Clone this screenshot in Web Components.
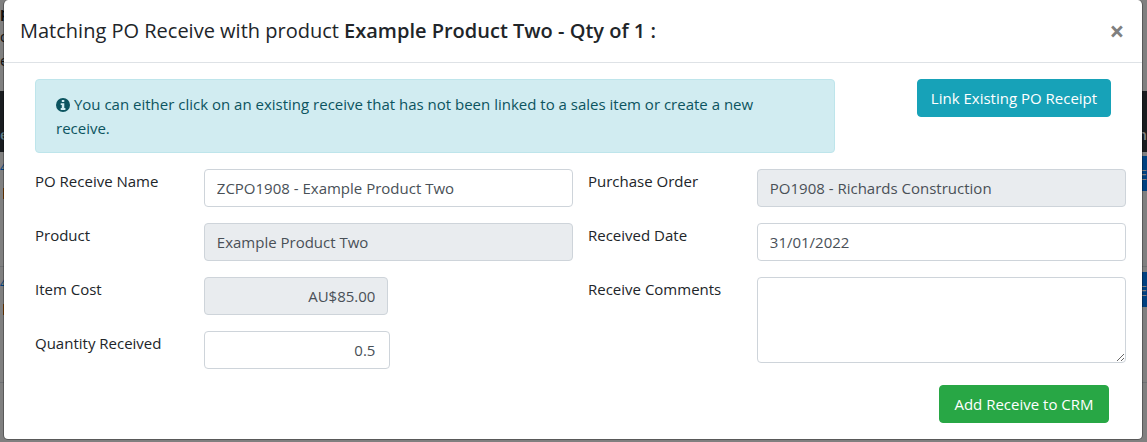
<!DOCTYPE html>
<html lang="en">
<head>
<meta charset="utf-8">
<title>Matching PO Receive</title>
<style>
  html, body { margin: 0; height: 100%; }
  body {
    font-family: "Open Sans", "Noto Sans", sans-serif;
    font-size: 15px;
    line-height: 24px;
    color: #212529;
    background: #808080;
    overflow: hidden;
  }
</style>
</head>
<body>
<receive-screen>
  <page-edge slot="page" side="left"></page-edge>
  <page-edge slot="page" side="right"></page-edge>
  <modal-dialog>
    <span slot="title">Matching PO Receive with product <b style="font-weight:600">Example Product Two - Qty of 1 :</b></span>
    <notice-row>
      You can either click on an existing receive that has not been linked to a sales item or create a new receive.
      <action-button slot="action" tone="info">Link Existing PO Receipt</action-button>
    </notice-row>
    <field-columns>
      <form-field slot="start" value="ZCPO1908 - Example Product Two">PO Receive Name</form-field>
      <form-field slot="start" value="Example Product Two" locked>Product</form-field>
      <form-field slot="start" value="AU$85.00" locked size="half">Item Cost</form-field>
      <form-field slot="start" value="0.5" size="number">Quantity Received</form-field>
      <form-field slot="end" value="PO1908 - Richards Construction" locked>Purchase Order</form-field>
      <form-field slot="end" value="31/01/2022">Received Date</form-field>
      <form-field slot="end" multiline>Receive Comments</form-field>
      <action-button slot="end" tone="success">Add Receive to CRM</action-button>
    </field-columns>
  </modal-dialog>
</receive-screen>

<script>
const define = (name, html, setup) => {
  const template = document.createElement('template');
  template.innerHTML = html;
  customElements.define(name, class extends HTMLElement {
    constructor() {
      super();
      this.attachShadow({ mode: 'open' }).append(template.content.cloneNode(true));
    }
    connectedCallback() { if (setup) setup(this, this.shadowRoot); }
  });
};

define('receive-screen', `
  <style>
    :host { display: grid; min-height: 100%; }
    .page, .layer { grid-area: 1 / 1; min-width: 0; }
    .page { display: flex; justify-content: space-between; }
    .layer { z-index: 1; padding: 0 4px 2px 3px; }
  </style>
  <div class="page"><slot name="page"></slot></div>
  <div class="layer"><slot></slot></div>`);

/* Slivers of the dimmed page that stay visible beside the dialog. */
define('page-edge', `
  <style>
    :host { display: flex; flex-direction: column; width: 16px; white-space: nowrap; }
    div { box-sizing: border-box; width: 100%; flex: none; display: flex; align-items: center; }
    :host([side=right]) div { justify-content: flex-end; }
    .top { height: 91px; flex-direction: column; color: #111; }
    :host([side=left]) .top { align-items: flex-start; }
    .head { height: 61px; background: #1a1d20; color: #808080; align-items: flex-end; padding-bottom: 6px; font-weight: 600; }
    :host([side=left]) .head { color: #5d7b86; }
    .row { height: 115px; border-bottom: 1px solid #6f7174; padding-top: 4px; align-items: flex-start; }
    .row + .row { height: 116px; padding-top: 5px; }
    .edit { height: 35px; background: #004080; color: #808080; }
    .row .stack { flex-direction: column; align-items: flex-start; }
    .link { line-height: 24px; color: #00407f; font-size: 12px; }
    .flag { width: 4px; height: 11px; box-sizing: border-box; border-right: 1px solid #804000; margin-top: 8px; }
    :host([side=left]) .edit, :host([side=right]) .stack, :host([side=right]) .top > * { display: none; }
  </style>
  <div class="top"><b>p</b><span>d</span><span>e</span></div>
  <div class="head"><span class="letter"></span></div>
  <div class="row"><div class="edit">E</div><div class="stack"><span class="link">4</span><span class="flag"></span></div></div>
  <div class="row"><div class="edit">E</div><div class="stack"><span class="link">4</span><span class="flag"></span></div></div>`,
  (el, root) => {
    root.querySelector('.letter').textContent = el.getAttribute('side') === 'left' ? 'e' : 'n';
  });

define('modal-dialog', `
  <style>
    :host { display: block; }
    section {
      background: #fff; background-clip: padding-box;
      border: 1px solid rgba(0, 0, 0, .3); border-top: 0; border-radius: 5px;
    }
    header {
      display: flex; justify-content: space-between; align-items: center;
      height: 62px; padding: 0 16px; border-bottom: 1px solid #dee2e6;
    }
    h5 { margin: 0; font-size: 20px; line-height: 30px; font-weight: 500; }
    button {
      border: 0; padding: 0; width: 18px; height: 26px; background: none;
      font: 700 26px/24px "Open Sans", sans-serif; color: #7f7f7f;
    }
    .body { padding: 16px 16px 16px 31px; }
  </style>
  <section role="dialog" aria-labelledby="title">
    <header><h5 id="title"><slot name="title"></slot></h5><button type="button" aria-label="Close">×</button></header>
    <div class="body"><slot></slot></div>
  </section>`);

define('notice-row', `
  <style>
    :host { display: flex; justify-content: space-between; align-items: flex-start; padding-right: 15px; margin-bottom: 16px; }
    p {
      box-sizing: border-box; width: 800px; flex: 0 1 auto; margin: 0; padding: 12px 48px 12px 20px;
      border: 1px solid #bee5eb; border-radius: 4px; background: #d1ecf1; color: #0c5460;
    }
    svg { width: 14px; height: 14px; vertical-align: -2px; }
  </style>
  <p role="alert"><svg viewBox="0 0 14 14" aria-hidden="true"><circle cx="7" cy="7" r="7" fill="#0c5460"/><path fill="#d1ecf1" d="M5.8 2h2.5v2.1H5.8zM4.7 5.2h3.6v4.9h1.1v1.8H4.7v-1.8h1.1V7H4.7z"/></svg> <slot></slot></p>
  <slot name="action"></slot>`);

define('action-button', `
  <style>
    :host { display: block; flex: none; }
    :host([tone=success]) { align-self: flex-end; margin: 6px 17px 0 0; }
    button {
      height: 38px; padding: 0 12px; border: 1px solid #17a2b8; border-radius: 4px;
      background: #17a2b8; color: #fff; font: inherit; display: block; min-width: 194px;
    }
    :host([tone=success]) button { background: #28a745; border-color: #28a745; min-width: 170px; }
  </style>
  <button type="button"><slot></slot></button>`);

define('field-columns', `
  <style>
    :host { display: grid; grid-template-columns: 1fr 1fr; gap: 15px; }
    div { display: flex; flex-direction: column; gap: 16px; min-width: 0; }
  </style>
  <div><slot name="start"></slot></div>
  <div><slot name="end"></slot></div>`);

define('form-field', `
  <style>
    :host { display: grid; grid-template-columns: 5fr 12fr; gap: 15px; align-items: start; }
    input, textarea {
      box-sizing: border-box; display: block; width: 100%; height: 38px; margin: 0; padding: 6px 12px;
      border: 1px solid #ced4da; border-radius: 4px; background: #fff;
      font: inherit; color: #495057; outline: 0;
    }
    textarea { height: 86px; }
    [readonly] { background: #e9ecef; }
    :host([size=half]) input { width: 50%; text-align: right; }
    :host([size=number]) input { width: calc(50% + 2px); padding-right: 14px; text-align: right; }
  </style>
  <label for="control"><slot></slot></label>`,
  (el, root) => {
    if (root.getElementById('control')) return;
    const control = document.createElement(el.hasAttribute('multiline') ? 'textarea' : 'input');
    control.id = 'control';
    if (el.hasAttribute('value')) control.value = el.getAttribute('value');
    control.readOnly = el.hasAttribute('locked');
    root.append(control);
  });
</script>
</body>
</html>
